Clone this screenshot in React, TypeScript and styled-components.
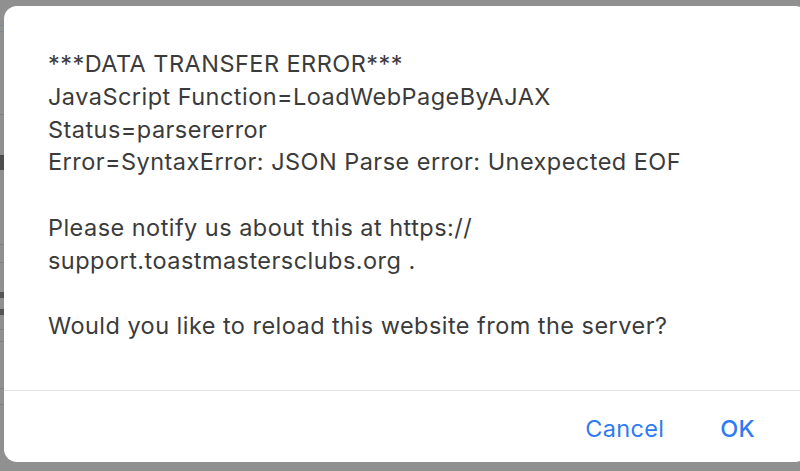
import React from "react";
import styled, { createGlobalStyle } from "styled-components";

const Global = createGlobalStyle`
  html, body { margin: 0; padding: 0; }
  body {
    width: 800px;
    height: 471px;
    overflow: hidden;
    background: #909090;
    font-family: Inter, "Noto Sans", "Liberation Sans", sans-serif;
  }
`;

const Backdrop = styled.div`
  position: relative;
  width: 800px;
  height: 471px;
  overflow: hidden;
  background: #909090;
`;

const PageStrip = styled.div`
  width: 8px;
  display: flex;
  flex-direction: column;
`;

const PageRow = styled.div<{ $h: number; $line?: string; $fill?: string }>`
  height: ${(p) => p.$h}px;
  border-bottom: 1px solid ${(p) => p.$line ?? "transparent"};
  background: ${(p) => p.$fill ?? "transparent"};
  box-sizing: border-box;
`;

const Dialog = styled.div`
  position: absolute;
  left: 4px;
  top: 6px;
  width: 804px;
  height: 456px;
  background: #ffffff;
  border-radius: 13px;
  display: flex;
  flex-direction: column;
  overflow: hidden;
`;

const Message = styled.div`
  flex: 1;
  padding: 42px 40px 0 44px;
  color: #3b3b3b;
  font-size: 23.5px;
  line-height: 32.75px;
  letter-spacing: 0.46px;
  white-space: pre-line;
  box-sizing: border-box;
`;

const Footer = styled.div`
  height: 71px;
  border-top: 1px solid #e3e3e3;
  display: flex;
  justify-content: flex-end;
  align-items: center;
  padding-right: 53px;
  gap: 56px;
`;

const Button = styled.button<{ $bold?: boolean }>`
  background: none;
  border: none;
  padding: 0;
  margin-top: 4px;
  font-family: inherit;
  font-size: 23.5px;
  letter-spacing: 0.3px;
  color: #2f7bf5;
  font-weight: ${(p) => (p.$bold ? 500 : 400)};
  cursor: pointer;
`;

const text = `***DATA TRANSFER ERROR***
JavaScript Function=LoadWebPageByAJAX
Status=parsererror
Error=SyntaxError: JSON Parse error: Unexpected EOF

Please notify us about this at https://
support.toastmastersclubs.org .

Would you like to reload this website from the server?`;

const rows: { h: number; line?: string; fill?: string }[] = [
  { h: 26, line: "#7d8a96" },
  { h: 6, line: "#7d8a96" },
  { h: 83, line: "#808080" },
  { h: 40 },
  { h: 15, fill: "#4d4d4d" },
  { h: 75, line: "#808080" },
  { h: 18, line: "#808080" },
  { h: 29 },
  { h: 6, fill: "#555" },
  { h: 11 },
  { h: 6, fill: "#555" },
  { h: 15, line: "#808080" },
  { h: 12, line: "#808080" },
  { h: 47, line: "#808080" },
  { h: 16, line: "#808080" },
];

export default function App() {
  return (
    <>
      <Global />
      <Backdrop>
        <PageStrip>
          {rows.map((r, i) => (
            <PageRow key={i} $h={r.h} $line={r.line} $fill={r.fill} />
          ))}
        </PageStrip>
        <Dialog>
          <Message>{text}</Message>
          <Footer>
            <Button>Cancel</Button>
            <Button $bold>OK</Button>
          </Footer>
        </Dialog>
      </Backdrop>
    </>
  );
}
